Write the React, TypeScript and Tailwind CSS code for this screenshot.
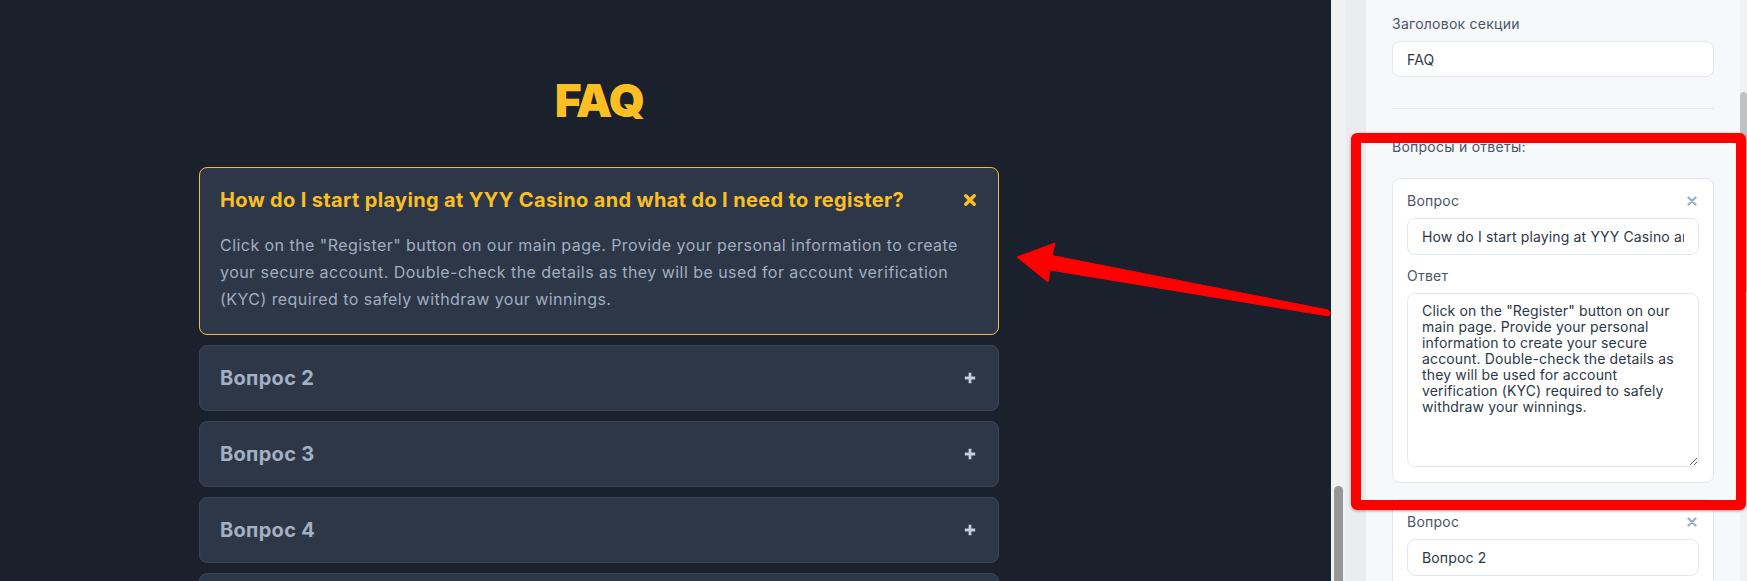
import React from "react";

const answer =
  'Click on the "Register" button on our main page. Provide your personal information to create your secure account. Double-check the details as they will be used for account verification (KYC) required to safely withdraw your winnings.';

function XIcon({ size, color, stroke }: { size: number; color: string; stroke: number }) {
  return (
    <svg width={size} height={size} viewBox="0 0 12 12" fill="none">
      <path d="M1.8 1.8 L10.2 10.2 M10.2 1.8 L1.8 10.2" stroke={color} strokeWidth={stroke} strokeLinecap="round" />
    </svg>
  );
}

function PlusIcon() {
  return (
    <svg width="12" height="12" viewBox="0 0 12 12" fill="none">
      <path d="M6 0.8 V11.2 M0.8 6 H11.2" stroke="#c3ccd9" strokeWidth="2.8" strokeLinecap="butt" />
    </svg>
  );
}

function ClosedCard({ title }: { title?: string }) {
  return (
    <div className="h-[66px] rounded-[8px] border border-[#3b4556] bg-[#2d3748] px-[20px] py-[20px]">
      {title && (
        <div className="flex items-center justify-between">
          <div className="text-[20px] font-bold leading-[24px] tracking-[0.3px] text-[#a3b0c4]">{title}</div>
          <div className="flex w-[16px] justify-center">
            <PlusIcon />
          </div>
        </div>
      )}
    </div>
  );
}

function SideCard({ q, a }: { q: string; a?: string }) {
  return (
    <div className="rounded-[8px] border border-[#e2e8f0] bg-white px-[14px] pt-[12px] pb-[15px]">
      <div className="flex h-[20px] items-center justify-between">
        <span className="text-[14px] leading-[20px] tracking-[0.25px] text-[#4a5568]">Вопрос</span>
        <span className="flex w-[14px] justify-center">
          <XIcon size={10} color="#a0aec0" stroke={2.8} />
        </span>
      </div>
      <input
        readOnly
        value={q}
        className="mt-[7px] block h-[37px] w-full rounded-[8px] border border-[#e2e8f0] bg-white px-[14px] text-[14px] tracking-[0.15px] text-[#2d3748] outline-none"
      />
      {a !== undefined && (
        <>
          <div className="mt-[11px] text-[14px] leading-[20px] tracking-[0.25px] text-[#4a5568]">Ответ</div>
          <textarea
            readOnly
            value={a}
            className="mt-[6.5px] block h-[174px] w-full rounded-[8px] border border-[#e2e8f0] bg-white px-[14px] py-[9px] text-[14px] leading-[16px] tracking-[0.15px] text-[#2d3748] outline-none"
          />
        </>
      )}
    </div>
  );
}

export default function App() {
  return (
    <div className="relative flex h-[581px] w-[1747px] overflow-hidden font-['Inter','Noto_Sans',sans-serif]">
      {/* Preview pane */}
      <div className="h-full w-[1331px] bg-[#1a202c]">
        <div className="flex w-[1198px] flex-col items-center pt-[73px]">
          <h1 className="mb-[39px] text-[46px] font-black leading-[55px] tracking-[-1.5px] text-[#fbbf24]">FAQ</h1>
          <div className="flex w-[800px] flex-col gap-[10px]">
            <div className="rounded-[8px] border border-[#f2bd35] bg-[#2d3748] px-[20px] py-[20px]">
              <div className="flex items-center justify-between">
                <div className="text-[20px] font-bold leading-[24px] tracking-[0.35px] text-[#fbbf24]">
                  How do I start playing at YYY Casino and what do I need to register?
                </div>
                <div className="flex w-[16px] justify-center">
                  <XIcon size={12} color="#fbbf24" stroke={3.4} />
                </div>
              </div>
              <p className="mt-[20px] text-[16px] leading-[27.2px] tracking-[0.45px] text-[#a0aec0]">{answer}</p>
            </div>
            <ClosedCard title="Вопрос 2" />
            <ClosedCard title="Вопрос 3" />
            <ClosedCard title="Вопрос 4" />
            <ClosedCard />
          </div>
        </div>
      </div>

      {/* preview scrollbar */}
      <div className="flex h-full w-[15px] flex-col items-center bg-[#f1f1f1]">
        <div className="h-[486px] shrink-0" />
        <div className="w-[9px] flex-1 rounded-t-full bg-[#979797]" />
      </div>

      {/* sidebar gutter */}
      <div className="h-full w-[20px] bg-[#eaecef]" />

      {/* settings panel */}
      <div className="h-full w-[374px] bg-[#f7f8fa] px-[26px] pt-[14px]">
        <div className="text-[14px] leading-[20px] tracking-[0.25px] text-[#4a5568]">Заголовок секции</div>
        <input
          readOnly
          value="FAQ"
          className="mt-[7px] block h-[36px] w-full rounded-[8px] border border-[#e2e8f0] bg-white px-[14px] text-[14px] tracking-[0.15px] text-[#2d3748] outline-none"
        />
        <div className="mt-[31px] h-px bg-[#e2e8f0]" />
        <div className="mt-[28px] text-[14px] leading-[20px] tracking-[0.25px] text-[#4a5568]">Вопросы и ответы:</div>
        <div className="mt-[21px]">
          <SideCard q="How do I start playing at YYY Casino and what do I need to register?" a={answer} />
        </div>
        <div className="mt-[16px]">
          <SideCard q="Вопрос 2" />
        </div>
      </div>

      {/* panel scrollbar */}
      <div className="flex h-full w-[7px] flex-col bg-[#f1f1f1]">
        <div className="h-[92px] shrink-0" />
        <div className="h-[200px] w-[7px] rounded-t-[4px] bg-[#c1c1c1]" />
      </div>

      {/* annotation: red frame */}
      <div className="pointer-events-none absolute left-[1351px] top-[133px] h-[377px] w-[395px] rounded-[6px] border-[10px] border-[#ff0000] shadow-[0_1px_3px_rgba(0,0,0,0.35)]" />

      {/* annotation: red arrow */}
      <svg className="pointer-events-none absolute left-0 top-0" width="1747" height="581" viewBox="0 0 1747 581">
        <polygon
          points="1017,257 1055,243 1052,255.5 1328,310 1330.5,313 1328.5,316 1050,270 1048,282"
          fill="#ff0000"
          stroke="#ff0000"
          strokeWidth="1"
          strokeLinejoin="round"
        />
      </svg>
    </div>
  );
}
